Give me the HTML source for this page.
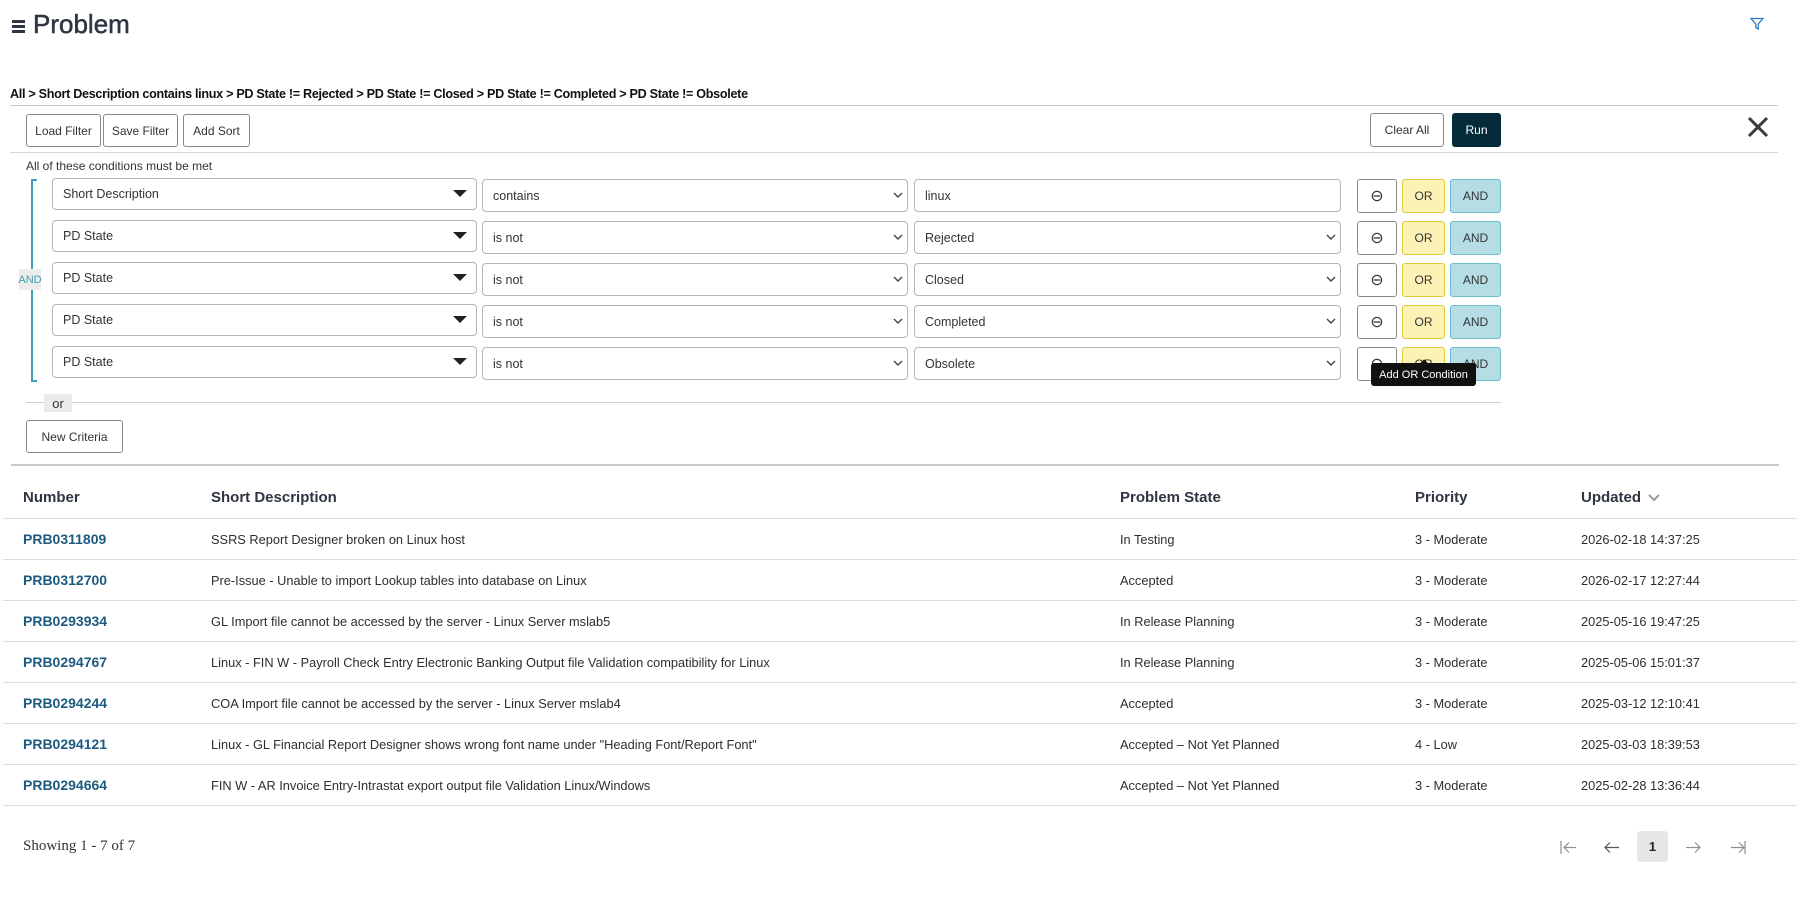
<!DOCTYPE html>
<html><head><meta charset="utf-8"><style>
*{box-sizing:border-box;margin:0;padding:0}
body{width:1797px;height:905px;background:#fff;font-family:"Liberation Sans",sans-serif;color:#2e2e2e;position:relative;overflow:hidden}
.a{position:absolute}
.btn{position:absolute;border:1px solid #8a8a8a;border-radius:3px;background:#fff;font-size:12px;color:#333;display:flex;align-items:center;justify-content:center;white-space:nowrap}
.inp{position:absolute;height:33px;border:1px solid #b5b5b5;border-radius:4px;background:#fff;font-size:12.5px;color:#333;display:flex;align-items:center;padding-left:10px}
.hl{position:absolute;height:1px;background:#ccc}
.th{position:absolute;font-size:15px;font-weight:bold;color:#2f3542;top:489px}
.td{position:absolute;font-size:12.8px;color:#2e2e2e}
.num{position:absolute;font-size:14px;font-weight:bold;color:#1c5a80}
</style></head><body>
<div class="a" style="left:12px;top:20px;width:13px;height:12px">
<div style="height:3px;background:#2f3542;margin-bottom:2px"></div><div style="height:3px;background:#2f3542;margin-bottom:2px"></div><div style="height:3px;background:#2f3542"></div></div>
<div class="a" style="left:33px;top:9px;font-size:26px;color:#2f3542;-webkit-text-stroke:0.5px #2f3542">Problem</div>
<svg class="a" style="left:1750px;top:17px" width="14" height="14" viewBox="0 0 14 14"><path d="M1 1.5H13L8.2 7V12L5.8 10.6V7Z" fill="none" stroke="#2e7bc4" stroke-width="1.3"/></svg>
<div class="a" style="left:10px;top:87px;font-size:12.6px;color:#111;font-weight:bold;letter-spacing:-0.3px">All &gt; Short Description contains linux &gt; PD State != Rejected &gt; PD State != Closed &gt; PD State != Completed &gt; PD State != Obsolete</div>
<div class="hl" style="left:10px;top:105px;width:1768px;background:#c8c8c8"></div>
<div class="btn" style="left:26px;top:114px;width:75px;height:33px">Load Filter</div>
<div class="btn" style="left:103px;top:114px;width:75px;height:33px">Save Filter</div>
<div class="btn" style="left:183px;top:114px;width:67px;height:33px">Add Sort</div>
<div class="btn" style="left:1370px;top:113px;width:74px;height:34px">Clear All</div>
<div class="btn" style="left:1452px;top:113px;width:49px;height:34px;background:#032b38;border-color:#032b38;color:#fff">Run</div>
<svg class="a" style="left:1747px;top:116px" width="22" height="22" viewBox="0 0 22 22"><path d="M2 2L20 20M20 2L2 20" stroke="#3a3a3a" stroke-width="3"/></svg>
<div class="hl" style="left:10px;top:152px;width:1768px;background:#d3d7db"></div>
<div class="a" style="left:26px;top:159px;font-size:12px;color:#333">All of these conditions must be met</div>
<div class="a" style="left:31px;top:179px;width:6px;height:203px;border:2px solid #3d9fb8;border-right:none"></div>
<div class="a" style="left:19px;top:269px;width:22px;height:21px;background:#ececec;color:#3d9fb8;font-size:11px;display:flex;align-items:center;justify-content:center">AND</div>

<div class="inp" style="left:52px;top:178px;width:425px;height:32px">Short Description</div>
<div class="inp" style="left:482px;top:179px;width:426px">contains</div>
<div class="inp" style="left:914px;top:179px;width:427px">linux</div>

<div class="inp" style="left:52px;top:220px;width:425px;height:32px">PD State</div>
<div class="inp" style="left:482px;top:221px;width:426px">is not</div>
<div class="inp" style="left:914px;top:221px;width:427px">Rejected</div>

<div class="inp" style="left:52px;top:262px;width:425px;height:32px">PD State</div>
<div class="inp" style="left:482px;top:263px;width:426px">is not</div>
<div class="inp" style="left:914px;top:263px;width:427px">Closed</div>

<div class="inp" style="left:52px;top:304px;width:425px;height:32px">PD State</div>
<div class="inp" style="left:482px;top:305px;width:426px">is not</div>
<div class="inp" style="left:914px;top:305px;width:427px">Completed</div>

<div class="inp" style="left:52px;top:346px;width:425px;height:32px">PD State</div>
<div class="inp" style="left:482px;top:347px;width:426px">is not</div>
<div class="inp" style="left:914px;top:347px;width:427px">Obsolete</div>

<svg class="a" style="left:0;top:0" width="1797" height="400">
<g fill="#222">
<path d="M453 190h14l-7 7z"/><path d="M453 232h14l-7 7z"/><path d="M453 274h14l-7 7z"/><path d="M453 316h14l-7 7z"/><path d="M453 358h14l-7 7z"/>
</g>
<g fill="none" stroke="#444" stroke-width="1.4">
<path d="M894 193l4 4 4-4"/><path d="M894 235l4 4 4-4"/><path d="M894 277l4 4 4-4"/><path d="M894 319l4 4 4-4"/><path d="M894 361l4 4 4-4"/>
<path d="M1327 235l4 4 4-4"/><path d="M1327 277l4 4 4-4"/><path d="M1327 319l4 4 4-4"/><path d="M1327 361l4 4 4-4"/>
</g>
</svg>

<div class="btn" style="left:1357px;top:179px;width:40px;height:34px;font-size:16px">⊖</div>
<div class="btn" style="left:1402px;top:179px;width:43px;height:34px;background:#fdf2b6;border-color:#e0c93a">OR</div>
<div class="btn" style="left:1450px;top:179px;width:51px;height:34px;background:#b5dde5;border-color:#6bbccc">AND</div>
<div class="btn" style="left:1357px;top:221px;width:40px;height:34px;font-size:16px">⊖</div>
<div class="btn" style="left:1402px;top:221px;width:43px;height:34px;background:#fdf2b6;border-color:#e0c93a">OR</div>
<div class="btn" style="left:1450px;top:221px;width:51px;height:34px;background:#b5dde5;border-color:#6bbccc">AND</div>
<div class="btn" style="left:1357px;top:263px;width:40px;height:34px;font-size:16px">⊖</div>
<div class="btn" style="left:1402px;top:263px;width:43px;height:34px;background:#fdf2b6;border-color:#e0c93a">OR</div>
<div class="btn" style="left:1450px;top:263px;width:51px;height:34px;background:#b5dde5;border-color:#6bbccc">AND</div>
<div class="btn" style="left:1357px;top:305px;width:40px;height:34px;font-size:16px">⊖</div>
<div class="btn" style="left:1402px;top:305px;width:43px;height:34px;background:#fdf2b6;border-color:#e0c93a">OR</div>
<div class="btn" style="left:1450px;top:305px;width:51px;height:34px;background:#b5dde5;border-color:#6bbccc">AND</div>
<div class="btn" style="left:1357px;top:347px;width:40px;height:34px;font-size:16px">⊖</div>
<div class="btn" style="left:1402px;top:347px;width:43px;height:34px;background:#fdf2b6;border-color:#e0c93a">OR</div>
<div class="btn" style="left:1450px;top:347px;width:51px;height:34px;background:#b5dde5;border-color:#6bbccc">AND</div>
<div class="a" style="left:1420px;top:361px;width:8px;height:8px;background:#111;transform:rotate(45deg)"></div>
<div class="a" style="left:1371px;top:363px;width:105px;height:23px;background:#111;border-radius:3px;color:#fff;font-size:11px;display:flex;align-items:center;justify-content:center">Add OR Condition</div>

<div class="hl" style="left:26px;top:402px;width:1475px;background:#c8d0d6"></div>
<div class="a" style="left:44px;top:394px;width:28px;height:18px;background:#e9ebed;font-size:13px;color:#333;display:flex;align-items:center;justify-content:center">or</div>
<div class="btn" style="left:26px;top:420px;width:97px;height:33px">New Criteria</div>
<div class="a" style="left:11px;top:464px;width:1768px;height:2px;background:#c8c8c8"></div>

<div class="th" style="left:23px">Number</div>
<div class="th" style="left:211px">Short Description</div>
<div class="th" style="left:1120px">Problem State</div>
<div class="th" style="left:1415px">Priority</div>
<div class="th" style="left:1581px">Updated <svg width="12" height="8" viewBox="0 0 12 8" style="margin-left:3px"><path d="M1 1l5 5 5-5" fill="none" stroke="#999" stroke-width="2"/></svg></div>

<div class="hl" style="left:3px;top:518px;width:1794px;background:#ddd"></div>
<div class="hl" style="left:3px;top:559px;width:1794px;background:#ddd"></div>
<div class="hl" style="left:3px;top:600px;width:1794px;background:#ddd"></div>
<div class="hl" style="left:3px;top:641px;width:1794px;background:#ddd"></div>
<div class="hl" style="left:3px;top:682px;width:1794px;background:#ddd"></div>
<div class="hl" style="left:3px;top:723px;width:1794px;background:#ddd"></div>
<div class="hl" style="left:3px;top:764px;width:1794px;background:#ddd"></div>
<div class="hl" style="left:3px;top:805px;width:1794px;background:#ddd"></div>

<div class="num" style="left:23px;top:531px">PRB0311809</div>
<div class="td" style="left:211px;top:532px">SSRS Report Designer broken on Linux host</div>
<div class="td" style="left:1120px;top:532px">In Testing</div>
<div class="td" style="left:1415px;top:532px">3 - Moderate</div>
<div class="td" style="left:1581px;top:532px">2026-02-18 14:37:25</div>

<div class="num" style="left:23px;top:572px">PRB0312700</div>
<div class="td" style="left:211px;top:573px">Pre-Issue - Unable to import Lookup tables into database on Linux</div>
<div class="td" style="left:1120px;top:573px">Accepted</div>
<div class="td" style="left:1415px;top:573px">3 - Moderate</div>
<div class="td" style="left:1581px;top:573px">2026-02-17 12:27:44</div>

<div class="num" style="left:23px;top:613px">PRB0293934</div>
<div class="td" style="left:211px;top:614px">GL Import file cannot be accessed by the server - Linux Server mslab5</div>
<div class="td" style="left:1120px;top:614px">In Release Planning</div>
<div class="td" style="left:1415px;top:614px">3 - Moderate</div>
<div class="td" style="left:1581px;top:614px">2025-05-16 19:47:25</div>

<div class="num" style="left:23px;top:654px">PRB0294767</div>
<div class="td" style="left:211px;top:655px">Linux - FIN W - Payroll Check Entry Electronic Banking Output file Validation compatibility for Linux</div>
<div class="td" style="left:1120px;top:655px">In Release Planning</div>
<div class="td" style="left:1415px;top:655px">3 - Moderate</div>
<div class="td" style="left:1581px;top:655px">2025-05-06 15:01:37</div>

<div class="num" style="left:23px;top:695px">PRB0294244</div>
<div class="td" style="left:211px;top:696px">COA Import file cannot be accessed by the server - Linux Server mslab4</div>
<div class="td" style="left:1120px;top:696px">Accepted</div>
<div class="td" style="left:1415px;top:696px">3 - Moderate</div>
<div class="td" style="left:1581px;top:696px">2025-03-12 12:10:41</div>

<div class="num" style="left:23px;top:736px">PRB0294121</div>
<div class="td" style="left:211px;top:737px">Linux - GL Financial Report Designer shows wrong font name under "Heading Font/Report Font"</div>
<div class="td" style="left:1120px;top:737px">Accepted – Not Yet Planned</div>
<div class="td" style="left:1415px;top:737px">4 - Low</div>
<div class="td" style="left:1581px;top:737px">2025-03-03 18:39:53</div>

<div class="num" style="left:23px;top:777px">PRB0294664</div>
<div class="td" style="left:211px;top:778px">FIN W - AR Invoice Entry-Intrastat export output file Validation Linux/Windows</div>
<div class="td" style="left:1120px;top:778px">Accepted – Not Yet Planned</div>
<div class="td" style="left:1415px;top:778px">3 - Moderate</div>
<div class="td" style="left:1581px;top:778px">2025-02-28 13:36:44</div>

<div class="a" style="left:23px;top:838px;font-family:'Liberation Serif',serif;font-size:15px;color:#333">Showing 1 - 7 of 7</div>

<svg class="a" style="left:1555px;top:835px" width="200" height="24" viewBox="0 0 200 24">
<g fill="none" stroke="#8a8f99" stroke-width="1.2">
<path d="M6 6v13M21 12.5H9M14 7.5l-5 5 5 5"/>
<path d="M64 12.5H50M55 7.5l-5 5 5 5" stroke="#555"/>
<path d="M131 12.5h14M140 7.5l5 5-5 5"/>
<path d="M176 12.5h13M184 7.5l5 5-5 5M190 6v13"/>
</g>
</svg>
<div class="a" style="left:1637px;top:831px;width:31px;height:31px;background:#e6e6e6;border-radius:4px;font-size:13px;font-weight:bold;color:#1f2430;display:flex;align-items:center;justify-content:center">1</div>
</body></html>
